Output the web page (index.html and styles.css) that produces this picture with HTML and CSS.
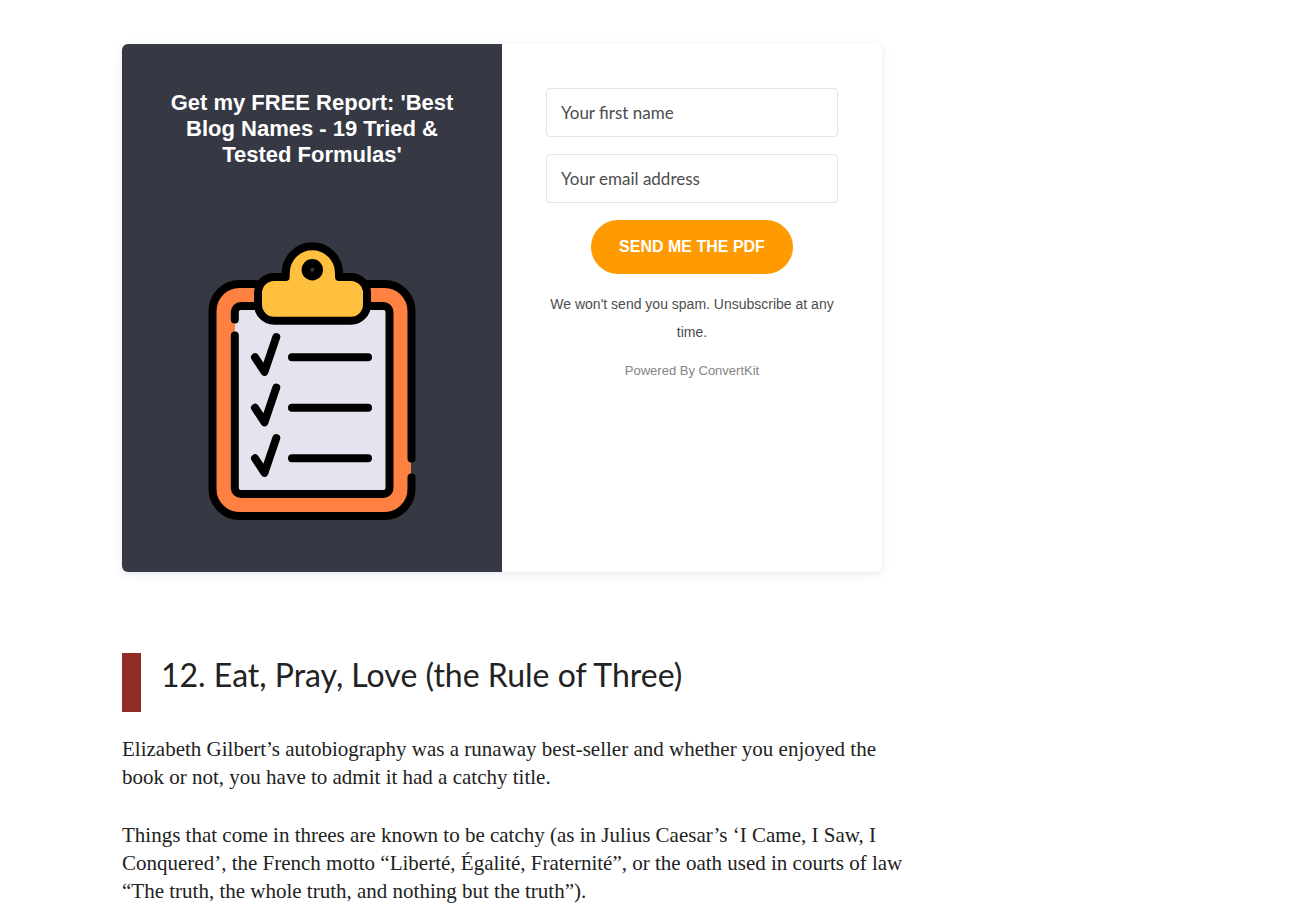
FILE: index.html
```html
<!DOCTYPE html>
<html lang="en">
<head>
<meta charset="utf-8">
<meta name="viewport" content="width=device-width, initial-scale=1">
<title>Best Blog Names</title>
<link rel="stylesheet" href="styles.css">
</head>
<body>
<main class="article">
  <section class="optin">
    <div class="optin-intro">
      <h3 class="optin-title">Get my FREE Report: 'Best Blog Names - 19 Tried &amp; Tested Formulas'</h3>
      <svg class="clipboard" viewBox="208 242 208 279" role="img" aria-label="Clipboard checklist">
        <rect x="212" y="284" width="199" height="232" rx="27" fill="#ff8142"/>
        <rect x="235" y="306" width="154" height="188" rx="5" fill="#e5e4ee"/>
        <g fill="none" stroke="#000" stroke-width="8" stroke-linecap="round" stroke-linejoin="round">
          <path d="M411.500 458.500V311A27 27 0 0 0 384.500 284H239.500A27 27 0 0 0 212.500 311V489A27 27 0 0 0 239.500 516H384.500A27 27 0 0 0 411.500 489V477.500"/>
          <path d="M234.800 319.500V312A6 6 0 0 1 240.800 306H383.500A6 6 0 0 1 389.500 312V488A6 6 0 0 1 383.500 494H240.800A6 6 0 0 1 234.800 488V335.500"/>
          <path fill="#ffbf3f" d="M274 277H285.700V273A26.650 26.650 0 0 1 339 273V277H351A16 16 0 0 1 367 293V304.700A16 16 0 0 1 351 320.700H274A16 16 0 0 1 258 304.700V293A16 16 0 0 1 274 277Z"/>
          <path d="M255 357.300L264.500 371.800L276.300 337M292 357.300H368"/>
          <path d="M255 407.800L264.500 422.300L276.300 387.500M292 407.800H368"/>
          <path d="M255 458.300L264.500 472.800L276.300 438M292 458.300H368"/>
        </g>
        <circle cx="312.300" cy="269.700" r="10.700"/>
        <circle cx="312.300" cy="269.700" r="2" fill="#363944"/>
      </svg>
    </div>
    <form class="optin-form">
      <input class="field" type="text" placeholder="Your first name" aria-label="Your first name">
      <input class="field" type="email" placeholder="Your email address" aria-label="Your email address">
      <button class="submit" type="button">SEND ME THE PDF</button>
      <p class="note">We won't send you spam. Unsubscribe at any time.</p>
      <a class="powered" href="#">Powered By ConvertKit</a>
    </form>
  </section>
  <h2 class="section-title">12. Eat, Pray, Love (the Rule of Three)</h2>
  <div class="prose">
    <p>Elizabeth Gilbert’s autobiography was a runaway best-seller and whether you enjoyed the book or not, you have to admit it had a catchy title.</p>
    <p>Things that come in threes are known to be catchy (as in Julius Caesar’s ‘I Came, I Saw, I Conquered’, the French motto “Liberté, Égalité, Fraternité”, or the oath used in courts of law “The truth, the whole truth, and nothing but the truth”).</p>
  </div>
</main>
</body>
</html>
```
FILE: styles.css
```css
* { box-sizing: border-box; }
body {
  margin: 0;
  background: #fff;
  color: #222;
  font-family: "Liberation Sans", Arial, sans-serif;
}
.article {
  max-width: 917px;
  padding: 44px 0 0 122px;
}
.optin {
  display: grid;
  grid-template-columns: 1fr 1fr;
  max-width: 760px;
  border-radius: 6px;
  overflow: hidden;
  background: #fff;
  box-shadow: 0 2px 8px 1px #e9edf1;
}
.optin-intro {
  display: flex;
  flex-direction: column;
  align-items: center;
  gap: 74px;
  padding: 46px 44px 51px;
  background: #363944;
}
.optin-title {
  margin: 0;
  color: #fff;
  font-size: 22px;
  line-height: 26px;
  font-weight: 700;
  text-align: center;
}
.clipboard { width: 208px; max-width: 100%; }
.optin-form {
  display: flex;
  flex-direction: column;
  align-items: center;
  padding: 44px;
}
.field {
  width: 100%;
  height: 49px;
  margin-bottom: 17px;
  padding: 0 14px;
  border: 1px solid #e3e3e3;
  border-radius: 4px;
  background: #fff;
  color: #4d4d4d;
  font: 17px Lato, sans-serif;
}
.field::placeholder { color: #4d4d4d; opacity: 1; }
.submit {
  height: 54px;
  padding: 0 28px;
  border: 0;
  border-radius: 27px;
  background: #ff9a00;
  color: #fff;
  font: 700 16px "Liberation Sans", Arial, sans-serif;
}
.note {
  margin: 16px 0 15px;
  color: #4d4d4d;
  font-size: 14px;
  line-height: 28px;
  text-align: center;
}
.powered {
  color: #848585;
  font-size: 13px;
  line-height: 20px;
  text-decoration: none;
}
.section-title {
  margin: 81px 0 23px;
  padding: 0 0 15px 20px;
  border-left: 19px solid #912b26;
  font: 400 32px/44px Lato, sans-serif;
}
.prose {
  font: 21px/28px Georgia, "Liberation Serif", serif;
}
.prose p { margin: 0 0 30px; }
```
